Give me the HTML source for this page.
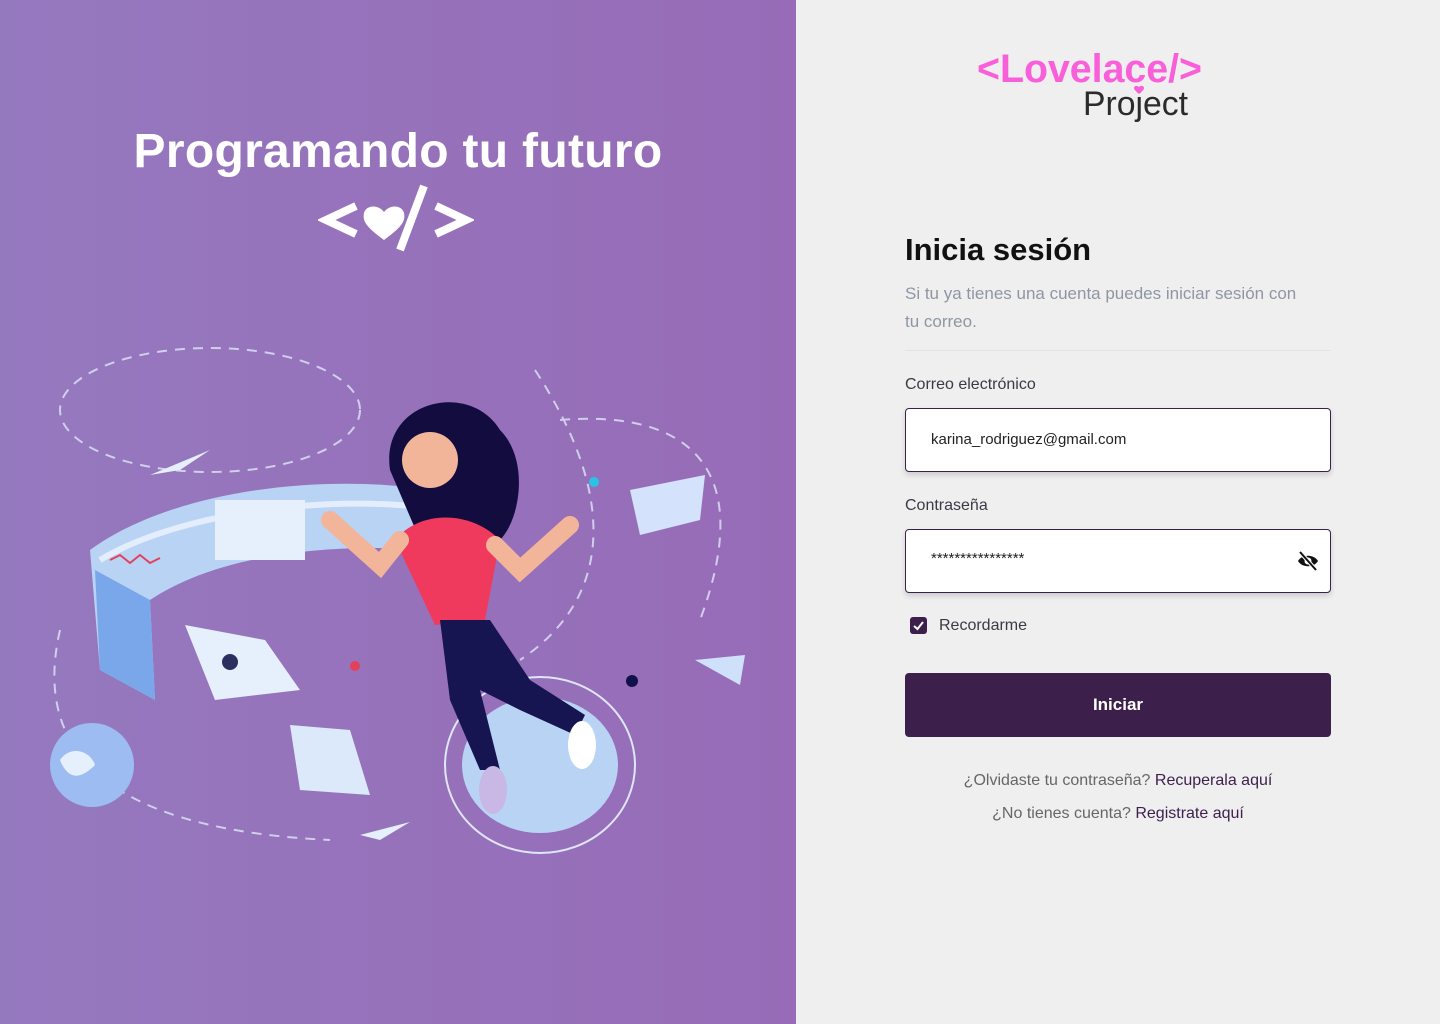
<!DOCTYPE html>
<html><head><meta charset="utf-8"><style>
*{margin:0;padding:0;box-sizing:border-box}
body{width:1440px;height:1024px;overflow:hidden;font-family:"Liberation Sans",sans-serif;background:#efefef;position:relative}
.left{position:absolute;left:0;top:0;width:796px;height:1024px;background:linear-gradient(90deg,#9579bf,#976bb7)}
.title{position:absolute;left:0;width:796px;top:124px;text-align:center;color:#fff;font-size:48px;font-weight:bold;letter-spacing:.3px}
.abs{position:absolute}
.lbl{position:absolute;left:905px;font-size:16px;color:#3a3a46}
.inp{position:absolute;left:905px;width:426px;height:64px;background:#fff;border:1px solid #3d1f4c;border-radius:4px;box-shadow:0 3px 6px rgba(0,0,0,.15);font-size:15px;color:#222;padding:22px 25px}
</style></head><body>
<div class="left">
<div class="title">Programando tu futuro</div>
<svg class="abs" style="left:318px;top:184px" width="156" height="68" viewBox="0 0 156 68">
<path d="M38 22 L8 36 L38 50" stroke="#fff" stroke-width="8" fill="none"/>
<path d="M118 22 L148 36 L118 50" stroke="#fff" stroke-width="8" fill="none"/>
<path d="M66 56 C50 44 44 38 46 29 C48 21 60 20 66 28 C72 20 84 21 86 29 C88 38 82 44 66 56Z" fill="#fff"/>
<path d="M106 2 L82 66" stroke="#fff" stroke-width="8"/>
</svg>
<svg class="abs" style="left:0;top:330px" width="796" height="540" viewBox="0 330 796 540">
<g fill="none" stroke="#dfe6f8" stroke-width="2" stroke-dasharray="10 8" opacity=".8">
<ellipse cx="210" cy="410" rx="150" ry="62"/>
<path d="M560 420 C680 410 760 460 700 620"/>
<path d="M60 630 C30 760 120 830 330 840"/>
<path d="M535 370 C620 500 610 600 520 660"/>
</g>
<path d="M90 550 C200 470 420 470 500 510 L500 560 C400 540 240 540 150 600 L155 700 L100 670Z" fill="#b9d3f5"/>
<path d="M100 560 C200 500 400 490 480 520" stroke="#fff" stroke-width="6" fill="none" opacity=".6"/>
<path d="M95 570 L150 600 L155 700 L100 670Z" fill="#7aa7ea"/>
<rect x="215" y="500" width="90" height="60" fill="#e6effc"/>
<path d="M110 560 l10-5 10 8 10-8 10 8 10-5" stroke="#e2415a" stroke-width="2" fill="none"/>
<path d="M185 625 L265 640 L300 690 L215 700Z" fill="#e6effc"/>
<circle cx="230" cy="662" r="8" fill="#2b2f5e"/>
<path d="M290 725 L350 730 L370 795 L300 790Z" fill="#dce9fb"/>
<circle cx="92" cy="765" r="42" fill="#9dbdf2"/>
<path d="M60 760 c10-15 30-10 35 5 c-10 10-25 20-35-5z" fill="#e6effc"/>
<ellipse cx="540" cy="765" rx="78" ry="68" fill="#b9d3f5"/>
<ellipse cx="540" cy="765" rx="95" ry="88" stroke="#dfe6f8" stroke-width="2" fill="none"/>
<path d="M630 490 L705 475 L700 520 L640 535Z" fill="#d4e2fb"/>
<path d="M695 660 L745 655 L740 685 Z" fill="#cfe0fb"/>
<path d="M150 475 L210 450 L180 470Z" fill="#e6effc"/>
<path d="M360 835 L410 822 L380 840Z" fill="#e6effc"/>
<path d="M390 470 C380 400 470 380 500 430 C530 460 520 520 500 540 L420 540Z" fill="#120c3f"/>
<circle cx="430" cy="460" r="28" fill="#f2b59a"/>
<path d="M395 540 C420 510 470 510 500 540 L485 620 L435 625Z" fill="#ef3a5d"/>
<path d="M330 520 L380 565 L400 540" stroke="#f2b59a" stroke-width="18" fill="none" stroke-linecap="round"/>
<path d="M570 525 L520 570 L495 545" stroke="#f2b59a" stroke-width="18" fill="none" stroke-linecap="round"/>
<path d="M440 620 L450 700 L480 770 L500 770 L480 690 L520 710 L575 735 L585 715 L530 680 L490 620Z" fill="#161451"/>
<ellipse cx="493" cy="790" rx="14" ry="24" fill="#c9b8e6"/>
<ellipse cx="582" cy="745" rx="14" ry="24" fill="#fff"/>
<circle cx="355" cy="666" r="5" fill="#e2415a"/>
<circle cx="632" cy="681" r="6" fill="#12104a"/>
<circle cx="594" cy="482" r="5" fill="#2ac3e4"/>
</svg>
</div>
<svg class="abs" style="left:975px;top:44px" width="232" height="82">
<text x="2" y="38" font-family="Liberation Sans" font-weight="bold" font-size="40" fill="#f95fd9" textLength="225" lengthAdjust="spacingAndGlyphs">&lt;Lovelace/&gt;</text>
<text x="108" y="71" font-family="Liberation Sans" font-size="34" fill="#2b2b2b" textLength="105" lengthAdjust="spacingAndGlyphs">Project</text>
<path d="M164 50 c-3-3-5-4-5-6 c0-2 3-3 5-1 c2-2 5-1 5 1 c0 2-2 3-5 6z" fill="#f95fd9"/>
</svg>
<div class="abs" style="left:905px;top:232px;font-size:31px;font-weight:bold;color:#111">Inicia sesión</div>
<div class="abs" style="left:905px;top:280px;width:405px;font-size:17px;line-height:28px;color:#8f96a3">Si tu ya tienes una cuenta puedes iniciar sesión con tu correo.</div>
<div class="abs" style="left:905px;top:350px;width:426px;height:1px;background:#e3e3e3"></div>
<div class="lbl" style="top:376px">Correo electrónico</div>
<div class="inp" style="top:408px">karina_rodriguez@gmail.com</div>
<div class="lbl" style="top:497px">Contraseña</div>
<div class="inp" style="top:529px;padding-top:20px">****************</div>
<svg class="abs" style="left:1296px;top:550px" width="24" height="22" viewBox="0 0 24 22"><path d="M2 11 C6 4 18 4 22 11 C18 18 6 18 2 11Z" fill="#111"/><circle cx="12" cy="11" r="3.5" fill="#fff"/><path d="M4 2 L20 20" stroke="#fff" stroke-width="4"/><path d="M4 2 L20 20" stroke="#111" stroke-width="2"/></svg>
<div class="abs" style="left:910px;top:617px;width:17px;height:17px;background:#3d1f4c;border-radius:3px"></div>
<svg class="abs" style="left:910px;top:617px" width="17" height="17"><path d="M4 9 L7.5 12 L13 5" stroke="#fff" stroke-width="2" fill="none"/></svg>
<div class="abs" style="left:939px;top:617px;font-size:16px;color:#3a3a46">Recordarme</div>
<div class="abs" style="left:905px;top:673px;width:426px;height:64px;background:#3d1f4c;border-radius:4px;color:#fff;font-weight:bold;font-size:17px;text-align:center;line-height:64px">Iniciar</div>
<div class="abs" style="left:905px;top:772px;width:426px;text-align:center;font-size:16px;color:#666">¿Olvidaste tu contraseña? <span style="color:#3d1f4c">Recuperala aquí</span></div>
<div class="abs" style="left:905px;top:805px;width:426px;text-align:center;font-size:16px;color:#666">¿No tienes cuenta? <span style="color:#3d1f4c">Registrate aquí</span></div>
</body></html>
